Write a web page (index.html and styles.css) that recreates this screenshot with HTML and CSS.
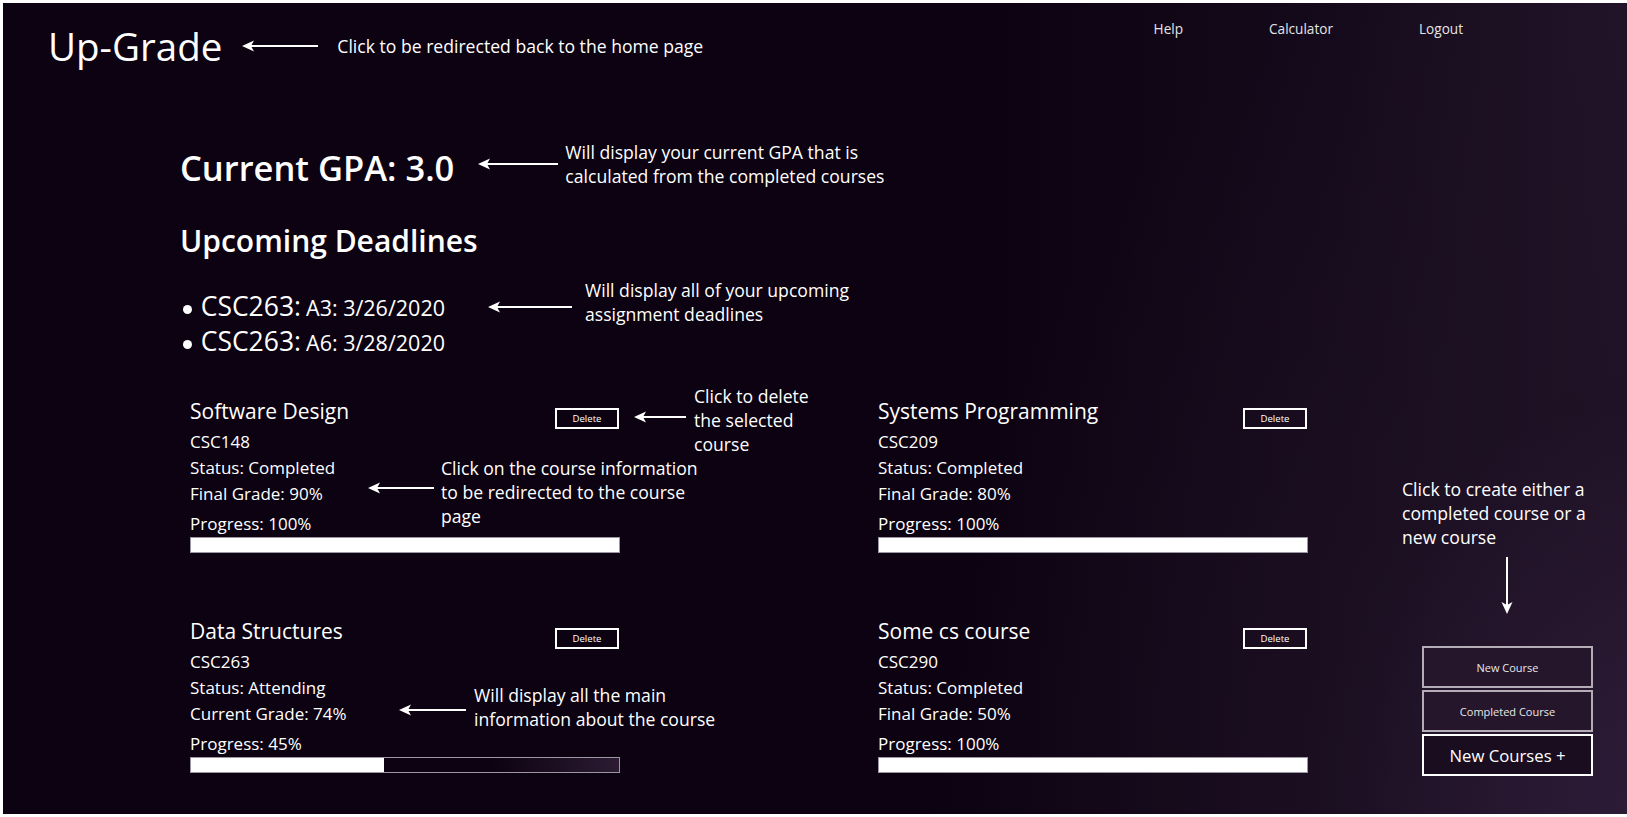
FILE: index.html
```html
<!DOCTYPE html>
<html lang="en">
<head>
<meta charset="utf-8">
<title>Up-Grade</title>
<link rel="stylesheet" href="styles.css">
</head>
<body>
<div class="frame">
  <header class="topbar">
    <div class="brand-row">
      <a class="brand" href="#">Up-Grade</a>
      <svg class="arrow arrow-brand" viewBox="0 0 76 12" width="76" height="12"><path d="M0 6 L12 0.5 L9 6 L12 11.5 Z" fill="#fff"/><rect x="8" y="5" width="68" height="2" fill="#fff"/></svg>
      <span class="note">Click to be redirected back to the home page</span>
    </div>
    <nav class="nav">
      <a href="#">Help</a>
      <a href="#">Calculator</a>
      <a href="#">Logout</a>
    </nav>
  </header>

  <main class="main">
    <section class="content">
      <div class="gpa-row">
        <h1 class="gpa">Current GPA: 3.0</h1>
        <svg class="arrow arrow-gpa" viewBox="0 0 80 12" width="80" height="12"><path d="M0 6 L12 0.5 L9 6 L12 11.5 Z" fill="#fff"/><rect x="8" y="5" width="72" height="2" fill="#fff"/></svg>
        <p class="note">Will display your current GPA that is<br>calculated from the completed courses</p>
      </div>

      <h2 class="deadlines-title">Upcoming Deadlines</h2>

      <div class="deadline-row">
        <ul class="deadlines">
          <li><span class="code">CSC263:</span> <span class="due">A3: 3/26/2020</span></li>
          <li><span class="code">CSC263:</span> <span class="due">A6: 3/28/2020</span></li>
        </ul>
        <svg class="arrow arrow-deadline" viewBox="0 0 84 12" width="84" height="12"><path d="M0 6 L12 0.5 L9 6 L12 11.5 Z" fill="#fff"/><rect x="8" y="5" width="76" height="2" fill="#fff"/></svg>
        <p class="note">Will display all of your upcoming<br>assignment deadlines</p>
      </div>

      <div class="courses">
        <article class="course">
          <div class="course-head">
            <h3 class="course-title">Software Design</h3>
            <button class="delete">Delete</button>
          </div>
          <p class="course-line">CSC148</p>
          <p class="course-line">Status: Completed</p>
          <p class="course-line">Final Grade: 90%</p>
          <p class="course-line progress-label">Progress: 100%</p>
          <div class="bar"><div class="fill" style="width:100%"></div></div>

          <svg class="arrow callout-arrow delete-arrow" viewBox="0 0 52 12" width="52" height="12"><path d="M0 6 L12 0.5 L9 6 L12 11.5 Z" fill="#fff"/><rect x="8" y="5" width="44" height="2" fill="#fff"/></svg>
          <p class="note callout delete-note">Click to delete<br>the selected<br>course</p>
          <svg class="arrow callout-arrow info-arrow" viewBox="0 0 66 12" width="66" height="12"><path d="M0 6 L12 0.5 L9 6 L12 11.5 Z" fill="#fff"/><rect x="8" y="5" width="58" height="2" fill="#fff"/></svg>
          <p class="note callout info-note">Click on the course information<br>to be redirected to the course<br>page</p>
        </article>

        <article class="course">
          <div class="course-head">
            <h3 class="course-title">Systems Programming</h3>
            <button class="delete">Delete</button>
          </div>
          <p class="course-line">CSC209</p>
          <p class="course-line">Status: Completed</p>
          <p class="course-line">Final Grade: 80%</p>
          <p class="course-line progress-label">Progress: 100%</p>
          <div class="bar"><div class="fill" style="width:100%"></div></div>
        </article>

        <article class="course">
          <div class="course-head">
            <h3 class="course-title">Data Structures</h3>
            <button class="delete">Delete</button>
          </div>
          <p class="course-line">CSC263</p>
          <p class="course-line">Status: Attending</p>
          <p class="course-line">Current Grade: 74%</p>
          <p class="course-line progress-label">Progress: 45%</p>
          <div class="bar"><div class="fill" style="width:45%"></div></div>

          <svg class="arrow callout-arrow main-arrow" viewBox="0 0 67 12" width="67" height="12"><path d="M0 6 L12 0.5 L9 6 L12 11.5 Z" fill="#fff"/><rect x="8" y="5" width="59" height="2" fill="#fff"/></svg>
          <p class="note callout main-note">Will display all the main<br>information about the course</p>
        </article>

        <article class="course">
          <div class="course-head">
            <h3 class="course-title">Some cs course</h3>
            <button class="delete">Delete</button>
          </div>
          <p class="course-line">CSC290</p>
          <p class="course-line">Status: Completed</p>
          <p class="course-line">Final Grade: 50%</p>
          <p class="course-line progress-label">Progress: 100%</p>
          <div class="bar"><div class="fill" style="width:100%"></div></div>
        </article>
      </div>
    </section>

    <aside class="create">
      <p class="note">Click to create either a<br>completed course or a<br>new course</p>
      <svg class="arrow-down" viewBox="0 0 12 57" width="12" height="57"><rect x="5" y="0" width="2" height="49" fill="#fff"/><path d="M6 57 L0.5 45 L6 48 L11.5 45 Z" fill="#fff"/></svg>
      <div class="create-buttons">
        <button class="create-btn">New Course</button>
        <button class="create-btn">Completed Course</button>
        <button class="create-btn main-btn">New Courses +</button>
      </div>
    </aside>
  </main>
</div>
</body>
</html>
```

FILE: styles.css
```css
* { box-sizing: border-box; }

html, body {
  margin: 0;
  padding: 0;
  background: #ffffff;
}

body {
  font-family: "Open Sans", "DejaVu Sans", sans-serif;
  color: #ffffff;
}

.frame {
  width: 1627px;
  height: 817px;
  border-top: 3px solid #ffffff;
  border-left: 3px solid #ffffff;
  border-bottom: 3px solid #ffffff;
  background:
    radial-gradient(ellipse 700px 900px at 100% 100%, rgba(46, 28, 56, 0.9) 0%, rgba(30, 17, 36, 0.6) 45%, rgba(12, 2, 17, 0) 100%),
    linear-gradient(to right, #0c0211 0%, #0c0211 60%, #150a1b 82%, #221429 100%);
  display: flex;
  flex-direction: column;
  overflow: hidden;
}

/* ---------- header ---------- */
.topbar {
  display: flex;
  justify-content: space-between;
  align-items: flex-start;
  padding: 0 164px 0 45px;
}

.brand-row {
  display: flex;
  align-items: center;
  margin-top: 23.8px;
}

.brand {
  font-size: 38.5px;
  line-height: 39px;
  color: #ffffff;
  text-decoration: none;
}

.arrow { display: block; flex: none; }

.arrow-brand { margin-left: 20px; }
.brand-row .note { margin-left: 19px; }

.nav {
  display: flex;
  gap: 86px;
  margin-top: 16.2px;
}

.nav a {
  font-size: 13.6px;
  line-height: 19px;
  color: #e4e4e4;
  text-decoration: none;
}

.note {
  margin: 0;
  font-size: 17.6px;
  line-height: 24px;
  color: #ffffff;
  white-space: nowrap;
}

/* ---------- main ---------- */
.main {
  flex: 1;
  display: flex;
  min-height: 0;
}

.content {
  padding-left: 177px;
}

.gpa-row {
  display: flex;
  align-items: flex-start;
  margin-top: 74.7px;
}

.gpa {
  margin: 7.1px 0 0 0;
  font-size: 34.5px;
  line-height: 40px;
  font-weight: 600;
}

.arrow-gpa { margin: 17.8px 0 0 24px; }
.gpa-row .note { margin-left: 7px; }

.deadlines-title {
  margin: 34.4px 0 0 0;
  font-size: 30px;
  line-height: 36px;
  font-weight: 600;
}

.deadline-row {
  display: flex;
  align-items: flex-start;
  margin-top: 19px;
}

.deadlines {
  list-style: none;
  margin: 12.5px 0 0 0;
  padding: 0;
}

.deadlines li {
  display: flex;
  align-items: baseline;
  font-size: 21.5px;
  line-height: 35px;
}

.deadlines li::before {
  content: "";
  width: 9px;
  height: 9px;
  border-radius: 50%;
  background: #ffffff;
  margin: 0 9.2px 0 2.5px;
  align-self: center;
  position: relative;
  top: 2px;
}

.deadlines .code {
  font-size: 26.5px;
  line-height: 1;
  margin-right: 5px;
}

.arrow-deadline { margin: 23.1px 0 0 43px; }
.deadline-row .note { margin-left: 13px; }

/* ---------- courses ---------- */
.courses {
  display: grid;
  grid-template-columns: 430px 430px;
  column-gap: 258px;
  row-gap: 61.5px;
  margin: 33.4px 0 0 10px;
}

.course {
  position: relative;
  cursor: pointer;
}

.course-head {
  display: flex;
  justify-content: space-between;
  align-items: flex-end;
  height: 34px;
  margin-bottom: 1px;
}

.course-title {
  margin: 0;
  font-size: 21px;
  line-height: 34px;
  font-weight: 400;
}

.delete {
  width: 64px;
  height: 21px;
  padding: 0;
  border: 2px solid #ffffff;
  background: transparent;
  color: #ffffff;
  font-family: "Open Sans", sans-serif;
  font-size: 9.6px;
  line-height: 17px;
  margin-right: 1px;
  margin-bottom: -1px;
}

.course-line {
  margin: 0;
  font-size: 17px;
  line-height: 26px;
}

.progress-label { margin-top: 4px; }

.bar {
  margin-top: 0;
  height: 16px;
  border: 1px solid #9b97a0;
  background: linear-gradient(to right, #0c0211 0%, #0c0211 70%, #2c1b33 100%);
}

.fill {
  height: 100%;
  background: #ffffff;
}

.callout,
.callout-arrow {
  position: absolute;
}

.delete-arrow { left: 444px; top: 16.9px; }
.delete-note { left: 504px; top: -9.9px; }
.info-arrow { left: 178px; top: 88.5px; }
.info-note { left: 251px; top: 62.7px; }
.main-arrow { left: 209px; top: 89.7px; }
.main-note { left: 284px; top: 68.4px; }

/* ---------- create aside ---------- */
.create {
  width: 225px;
  margin-left: auto;
  align-self: flex-end;
  padding-bottom: 38px;
  display: flex;
  flex-direction: column;
}

.arrow-down {
  display: block;
  margin: 8px 0 0 99px;
}

.create-buttons {
  display: flex;
  flex-direction: column;
  gap: 2px;
  margin: 32px 0 0 20px;
  width: 171px;
}

.create-btn {
  height: 42px;
  padding: 0;
  border: 2px solid #b4adb8;
  background: #25162b;
  color: #e8e8e8;
  font-family: "Open Sans", sans-serif;
  font-size: 11px;
}

.create-btn.main-btn {
  border-color: #ffffff;
  background: #1a0d1f;
  color: #ffffff;
  font-size: 16.7px;
}
```
